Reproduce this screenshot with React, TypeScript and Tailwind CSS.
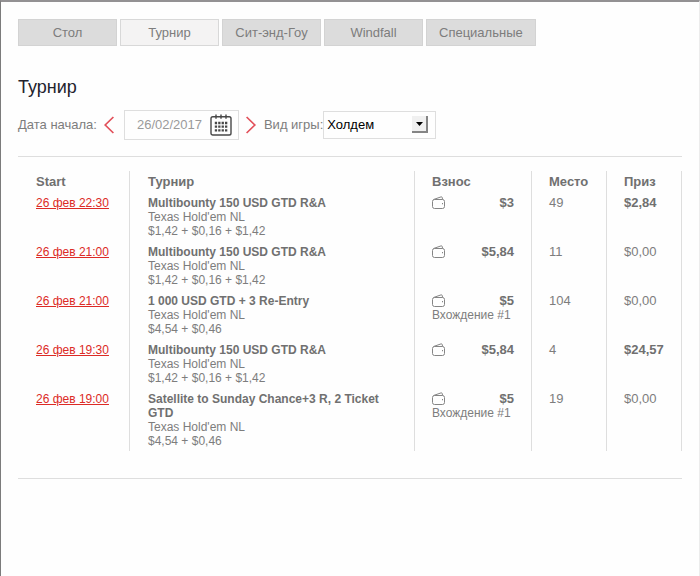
import React, { useState } from 'react';

type Result = {
  start: string;
  name: string;
  fee: string;
  buyIn: string;
  entry?: string;
  place: string;
  prize: string;
  won?: boolean;
};

const tabs = ['Стол', 'Турнир', 'Сит-энд-Гоу', 'Windfall', 'Специальные'];

const results: Result[] = [
  { start: '26 фев 22:30', name: 'Multibounty 150 USD GTD R&A', fee: '$1,42 + $0,16 + $1,42', buyIn: '$3', place: '49', prize: '$2,84', won: true },
  { start: '26 фев 21:00', name: 'Multibounty 150 USD GTD R&A', fee: '$1,42 + $0,16 + $1,42', buyIn: '$5,84', place: '11', prize: '$0,00' },
  { start: '26 фев 21:00', name: '1 000 USD GTD + 3 Re-Entry', fee: '$4,54 + $0,46', buyIn: '$5', entry: 'Вхождение #1', place: '104', prize: '$0,00' },
  { start: '26 фев 19:30', name: 'Multibounty 150 USD GTD R&A', fee: '$1,42 + $0,16 + $1,42', buyIn: '$5,84', place: '4', prize: '$24,57', won: true },
  { start: '26 фев 19:00', name: 'Satellite to Sunday Chance+3 R, 2 Ticket GTD', fee: '$4,54 + $0,46', buyIn: '$5', entry: 'Вхождение #1', place: '19', prize: '$0,00' },
];

function Chevron({ left = false }: { left?: boolean }) {
  return (
    <svg width="10" height="18" viewBox="0 0 10 18" fill="none" stroke="#e2505a" strokeWidth="1.7" aria-hidden="true">
      <path d={left ? 'M9.4 1 1.2 9l8.2 8' : 'M.6 1l8.2 8-8.2 8'} />
    </svg>
  );
}

function CalendarIcon() {
  return (
    <svg width="22" height="22" viewBox="0 0 22 22" fill="none" stroke="#484848" strokeWidth="1.4" aria-hidden="true">
      <rect x="1" y="2.7" width="20" height="18.3" rx="1.8" />
      <path d="M6 .5v4.3M11 .5v4.3M16 .5v4.3" />
      <path d="M4.8 9h12.5M4.8 12.7h12.5M4.8 16.4h12.5" strokeWidth="2.3" strokeDasharray="2.3 1.1" />
    </svg>
  );
}

function WalletIcon() {
  return (
    <svg width="13" height="14" viewBox="0 0 13 14" fill="none" stroke="#858585" strokeWidth="1" aria-hidden="true">
      <rect x=".5" y="3.5" width="12" height="9" rx="2" />
      <path d="M1.5 3.5 9 .9q1-.3 1.2.6l.4 2" />
      <path d="M10 7.7h1" strokeWidth="1.3" />
    </svg>
  );
}

const cell = 'border-r border-[#dedede] pt-1 pb-[3px] text-left align-top';
const wide = `${cell} px-[18px]`;
const narrow = `${cell} px-[17px]`;

const columns = [
  { title: 'Start', style: wide },
  { title: 'Турнир', style: wide },
  { title: 'Взнос', style: narrow },
  { title: 'Место', style: narrow },
  { title: 'Приз', style: narrow },
];

export default function App() {
  const [active, setActive] = useState('Турнир');
  const [date, setDate] = useState('26/02/2017');

  return (
    <main className="min-h-screen border-t-2 border-r border-l border-t-[#939193] border-r-[#ececec] border-l-[#7b7b7b] bg-[#fefefe] px-[17px] pt-[17px] font-['Liberation_Sans',Arial,sans-serif] text-[13px] leading-[14px] text-[#7d7d7d]">
      <nav className="flex gap-[3px]">
        {tabs.map((tab) => (
          <button
            key={tab}
            type="button"
            onClick={() => setActive(tab)}
            className={`h-[27px] min-w-[99px] border px-3 ${
              tab === active ? 'border-[#d8d8d8] bg-[#f4f3f3]' : 'border-[#d3d3d3] bg-[#dcdcdc]'
            }`}
          >
            {tab}
          </button>
        ))}
      </nav>

      <h1 className="mt-[31px] text-[18px] leading-5 text-[#23232d]">Турнир</h1>

      <div className="mt-[13px] flex items-center">
        <label htmlFor="date">Дата начала:</label>
        <button type="button" aria-label="Назад" className="pr-[10px] pl-[7px]">
          <Chevron left />
        </button>
        <div className="flex h-[30px] w-[115px] items-center justify-between border border-[#dedede] pr-[6px] pl-3">
          <input
            id="date"
            type="text"
            value={date}
            onChange={(e) => setDate(e.target.value)}
            className="w-[68px] bg-transparent text-[#9a9a9a] outline-none"
          />
          <button type="button" aria-label="Календарь">
            <CalendarIcon />
          </button>
        </div>
        <button type="button" aria-label="Вперёд" className="pr-2 pl-[7px]">
          <Chevron />
        </button>
        <label htmlFor="game">Вид игры:</label>
        <div className="relative">
          <select
            id="game"
            className="h-7 w-[113px] appearance-none border border-[#dedede] bg-transparent pl-[3px] text-black outline-none"
          >
            <option>Холдем</option>
            <option>Омаха</option>
          </select>
          <span className="pointer-events-none absolute top-[5px] right-2 flex h-[17px] w-4 items-center justify-center border-r-2 border-b-2 border-[#858585] bg-[#f0f0f0]">
            <svg width="7" height="4" viewBox="0 0 7 4" aria-hidden="true">
              <path d="M0 0h7L3.5 4z" fill="#000" />
            </svg>
          </span>
        </div>
      </div>

      <section className="mt-4 border-y border-[#dedede] pt-[14px] pb-[27px]">
        <table className="w-full table-fixed border-separate border-spacing-0">
          <colgroup>
            <col className="w-28" />
            <col />
            <col className="w-[117px]" />
            <col className="w-[75px]" />
            <col className="w-[75px]" />
          </colgroup>
          <thead>
            <tr className="text-[#707070]">
              {columns.map((c) => (
                <th key={c.title} scope="col" className={c.style}>{c.title}</th>
              ))}
            </tr>
          </thead>
          <tbody>
            {results.map((r, i) => (
              <tr key={i}>
                <td className={`${wide} text-[12px]`}>
                  <a href="#" className="block whitespace-nowrap text-[#dc2b26] underline">{r.start}</a>
                </td>
                <td className={`${wide} text-[12px]`}>
                  <strong className="block text-[#707070]">{r.name}</strong>
                  <div>Texas Hold'em NL</div>
                  <div>{r.fee}</div>
                </td>
                <td className={narrow}>
                  <div className="flex items-center justify-between">
                    <WalletIcon />
                    <strong className="text-[#707070]">{r.buyIn}</strong>
                  </div>
                  {r.entry && <div className="text-[12px] whitespace-nowrap">{r.entry}</div>}
                </td>
                <td className={narrow}>{r.place}</td>
                <td className={narrow}>{r.won ? <strong className="text-[#707070]">{r.prize}</strong> : r.prize}</td>
              </tr>
            ))}
          </tbody>
        </table>
      </section>
    </main>
  );
}
